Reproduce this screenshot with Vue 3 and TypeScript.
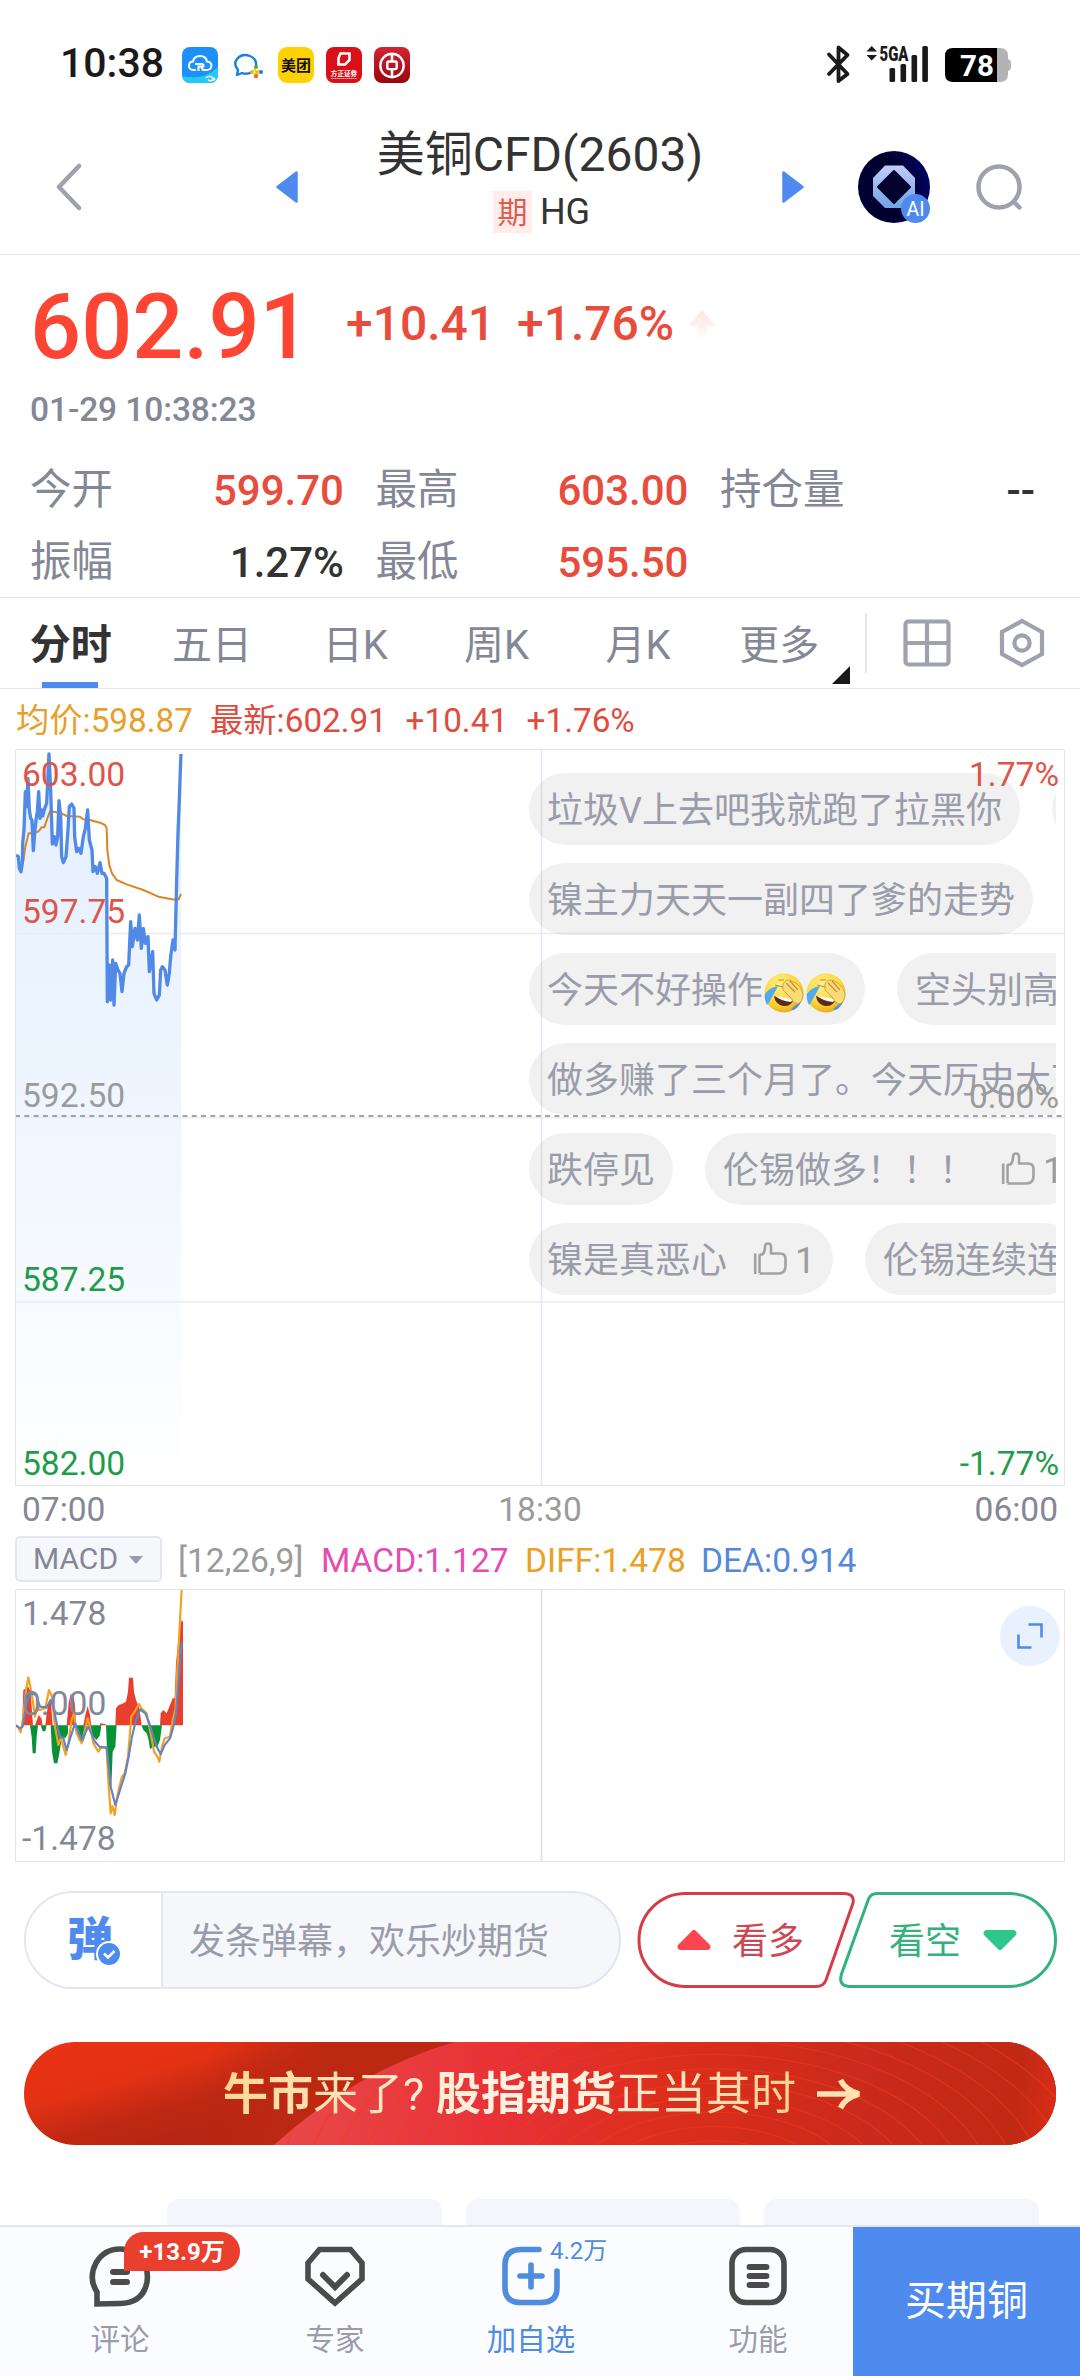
<script setup lang="ts">
interface Stat { label: string; value: string; tone: 'up' | 'flat' }
interface Bullet { text: string; emoji?: number; likes?: number }
interface AxisLabel { text: string; y: number; tone: 'up' | 'down' | 'mid' }

const stats: Stat[] = [
  { label: '今开', value: '599.70', tone: 'up' },
  { label: '最高', value: '603.00', tone: 'up' },
  { label: '持仓量', value: '--', tone: 'flat' },
  { label: '振幅', value: '1.27%', tone: 'flat' },
  { label: '最低', value: '595.50', tone: 'up' },
]

const tabs: string[] = ['分时', '五日', '日K', '周K', '月K', '更多']

const priceAxis: AxisLabel[] = [
  { text: '603.00', y: 26, tone: 'up' },
  { text: '597.75', y: 163, tone: 'up' },
  { text: '592.50', y: 347, tone: 'mid' },
  { text: '587.25', y: 531, tone: 'down' },
  { text: '582.00', y: 715, tone: 'down' },
]
const percentAxis: AxisLabel[] = [
  { text: '1.77%', y: 26, tone: 'up' },
  { text: '0.00%', y: 348, tone: 'mid' },
  { text: '-1.77%', y: 715, tone: 'down' },
]
const macdAxis = [
  { text: '1.478', y: 25 },
  { text: '0.000', y: 115 },
  { text: '-1.478', y: 250 },
]

const bullets: Bullet[][] = [
  [{ text: '垃圾V上去吧我就跑了拉黑你' }, { text: '' }],
  [{ text: '镍主力天天一副四了爹的走势' }],
  [{ text: '今天不好操作', emoji: 2 }, { text: '空头别高兴' }],
  [{ text: '做多赚了三个月了。今天历史大下跌' }],
  [{ text: '跌停见' }, { text: '伦锡做多！！！', likes: 1 }],
  [{ text: '镍是真恶心', likes: 1 }, { text: '伦锡连续连' }],
]

const priceLine =
  '48,345 55,350 58,385 63,395 67,370 68,310 72,270 76,155 80,200 84,115 88,210 92,235 96,240 100,332 104,280 108,240 112,215 116,155 120,235 125,210 128,228 134,205 140,190 147,42 152,150 157,312 163,290 168,315 173,290 177,182 182,230 185,350 190,368 198,350 204,270 208,200 215,192 222,205 224,290 230,335 236,325 243,340 250,290 256,265 263,210 268,300 276,330 279,395 286,380 292,400 300,368 306,400 312,400 320,415 322,785 328,675 332,780 338,660 342,795 347,670 354,690 360,700 366,755 372,700 380,680 386,675 392,545 397,620 405,565 412,600 418,525 424,625 430,565 436,610 444,590 448,695 458,635 462,760 470,780 478,765 482,690 487,680 495,690 502,735 508,700 512,650 519,600 525,630 530,420 534,280 538,180 541,90 543,42'
const averageLine =
  '70,365 76,320 86,280 100,280 115,275 125,262 133,262 142,235 150,214 165,216 180,218 200,228 240,230 250,238 270,240 300,248 315,255 320,265 322,330 328,375 336,400 350,420 380,433 430,450 475,470 528,480 536,478 543,462'

const redBars: string[] = [
  '66,466 70,360 85,350 92,365 97,440 99,466',
  '105,466 116,435 124,445 128,466',
  '136,466 140,430 146,395 153,400 158,466',
  '200,466 206,400 212,372 219,375 224,400 229,466',
  '250,466 256,435 263,408 270,435 274,466',
  '300,460 318,463 318,466 300,466',
  '346,466 348,415 356,405 366,402 378,395 384,365 387,323 399,323 402,365 408,390 418,415 425,466',
  '480,466 482,430 490,420 500,430 510,405 518,385 524,385 528,280 538,180 545,150 549,155 549,466',
]
const greenBars: string[] = [
  '90,466 95,500 98,550 107,550 110,500 114,466',
  '122,466 128,484 136,484 140,466',
  '152,466 156,545 162,580 172,580 178,550 186,500 196,505 204,490 204,466',
  '222,466 236,510 250,515 258,490 262,466',
  '266,466 276,495 290,510 300,495 304,466',
  '318,466 322,560 328,650 334,650 338,545 346,530 350,466',
  '424,466 430,480 440,490 446,510 450,538 460,530 472,530 480,510 486,466',
]
const diffLine =
  '48,466 55,472 62,487 70,440 78,360 85,322 95,370 105,440 110,415 120,420 136,415 147,360 156,380 165,470 175,525 182,505 190,530 197,555 205,520 215,450 222,430 230,490 245,520 263,445 270,470 280,520 295,545 305,530 320,535 326,650 332,730 337,708 344,735 350,690 358,650 366,620 374,610 384,560 394,440 404,425 417,402 424,415 440,430 448,470 456,510 462,545 472,560 478,575 486,530 494,505 510,500 518,450 526,420 532,300 540,150 545,60'
const deaLine =
  '48,466 60,475 68,470 80,400 92,370 108,375 120,410 140,412 152,390 160,410 172,470 180,500 190,505 200,540 212,500 225,460 245,510 265,470 285,515 300,532 320,532 326,590 332,650 346,705 360,660 376,610 386,560 396,500 408,450 420,418 436,430 448,460 460,500 470,530 482,552 494,525 510,505 520,470 528,430 536,330 545,215'

const ripples: number[] = Array.from({ length: 17 }, (_, i) => 60 + i * 17)
</script>

<template>
  <div class="screen">
    <div class="status">
      <span class="clock">10:38</span>
      <div class="apps">
        <svg width="36" height="36" viewBox="0 0 36 36">
          <defs><clipPath id="r1"><rect width="36" height="36" rx="8" /></clipPath></defs>
          <g clip-path="url(#r1)">
            <rect width="36" height="36" fill="#1e90fb" />
            <path d="M0 29Q22 34 36 20V36H0Z" fill="#25c9f7" />
            <path d="M14 23H11Q6.500 22.500 7 18Q7.500 14.500 11 14.500Q12 9 18 9Q24 9 25 14.500Q29.500 15 29.500 19Q29 23 24.500 23H21L19 19.500M13 17H19.500Q22 17 21.500 19.500H16.500V24" fill="none" stroke="#fff" stroke-width="2" />
            <path d="M24 31Q28 27 33 33M26 33Q30 35 33 31" fill="none" stroke="#fff" stroke-width="1.500" />
          </g>
        </svg>
        <svg width="36" height="36" viewBox="0 0 36 36">
          <path d="M22 25Q17 28 12 26L7 28L8 23Q3 17 7 12Q12 6 20 9Q27 12 26 19" fill="none" stroke="#1c7fd6" stroke-width="2.400" stroke-linejoin="round" />
          <circle cx="26" cy="20" r="2" fill="#3eae3a" /><circle cx="31" cy="25" r="2" fill="#1c7fd6" /><circle cx="26" cy="29" r="2.200" fill="#ee6a2b" /><circle cx="22" cy="25" r="2" fill="#f7b500" />
          <path d="M24 22L29 27M29 23L24 28" stroke="#f7b500" stroke-width="1.600" />
        </svg>
        <svg width="36" height="36" viewBox="0 0 36 36">
          <rect width="36" height="36" rx="9" fill="#ffd100" />
          <text x="18" y="23.500" text-anchor="middle" font-size="15" font-weight="700" fill="#111">美团</text>
        </svg>
        <svg width="36" height="36" viewBox="0 0 36 36">
          <rect width="36" height="36" rx="8" fill="#da1019" />
          <path d="M14.500 6.500H23.500V13L19 17.500H12.500V11L14.500 6.500Z" fill="none" stroke="#fff" stroke-width="2.600" />
          <text x="18" y="28.500" text-anchor="middle" font-size="6.600" font-weight="700" fill="#fff">方正证券</text>
          <path d="M5 31.500H31" stroke="#fff" stroke-width="0.700" stroke-dasharray="1.500 .5" />
        </svg>
        <svg width="36" height="36" viewBox="0 0 36 36">
          <defs><linearGradient id="boc" x2="0" y2="1"><stop stop-color="#d32432" /><stop offset="1" stop-color="#98060f" /></linearGradient></defs>
          <rect width="36" height="36" rx="8" fill="url(#boc)" />
          <circle cx="18" cy="18.500" r="11.700" fill="none" stroke="#fff" stroke-width="2.400" />
          <rect x="13.300" y="14.500" width="9.400" height="7.600" rx="1.500" fill="none" stroke="#fff" stroke-width="2.400" />
          <path d="M18 6V14.500M18 22V31" stroke="#fff" stroke-width="2.600" />
        </svg>
      </div>
      <svg class="signals" width="186" height="40" viewBox="826 44 186 40">
        <path d="M829 54.500L847.500 74L838.500 81V47.500L847.500 55L829 74" fill="none" stroke="#1a1a1a" stroke-width="3.800" stroke-linejoin="round" stroke-linecap="round" />
        <path d="M866.500 51.500L871.700 46L877 51.500ZM866.500 55L871.700 60.500L877 55Z" fill="#1a1a1a" />
        <text x="879.500" y="61" font-size="21" font-weight="900" fill="#1a1a1a" textLength="29" lengthAdjust="spacingAndGlyphs">5GA</text>
        <g fill="#1a1a1a"><rect x="889.500" y="68" width="5.600" height="14" rx="1.500" /><rect x="900.500" y="64" width="5.600" height="18" rx="1.500" /><rect x="911.500" y="55" width="5.600" height="27" rx="1.500" /><rect x="922.300" y="46" width="5.600" height="36" rx="1.500" /></g>
        <path d="M996 48H1000Q1008 48 1008 56V59Q1011 60 1011 63V67Q1011 70 1008 71V74Q1008 82 1000 82H996Z" fill="#b3b3b3" />
        <path d="M953 48H997V82H953Q945 82 945 74V56Q945 48 953 48Z" fill="#000" />
        <text x="977" y="76" text-anchor="middle" font-size="29.500" font-weight="700" fill="#fff">78</text>
      </svg>
    </div>

    <header class="head">
      <svg class="back" width="28" height="48" viewBox="0 0 28 48"><path d="M24 3L4 24L24 45" fill="none" stroke="#9fa1ad" stroke-width="4.500" stroke-linecap="round" stroke-linejoin="round" /></svg>
      <svg class="prev" width="22" height="32" viewBox="0 0 22 32"><path d="M20.500 1.500V30.500L1.500 16Z" fill="#4f8bee" stroke="#4f8bee" stroke-width="2.500" stroke-linejoin="round" /></svg>
      <div class="title">
        <div class="name">美铜CFD(2603)</div>
        <div class="code"><span class="tag">期</span><span>HG</span></div>
      </div>
      <svg class="next" width="22" height="32" viewBox="0 0 22 32"><path d="M1.500 1.500V30.500L20.500 16Z" fill="#4f8bee" stroke="#4f8bee" stroke-width="2.500" stroke-linejoin="round" /></svg>
      <svg class="ai" width="72" height="72" viewBox="0 0 72 72">
        <defs>
          <linearGradient id="oct" x2="0" y2="1"><stop stop-color="#c3ccfa" /><stop offset="1" stop-color="#6fa3e4" /></linearGradient>
          <radialGradient id="orb" cx=".12" cy=".55" r=".95"><stop stop-color="#000033" /><stop offset=".55" stop-color="#00002e" /><stop offset="1" stop-color="#02026a" /></radialGradient>
        </defs>
        <circle cx="36" cy="36" r="36" fill="url(#orb)" />
        <path d="M27 14.500H45L57 27V45L45 57H27L15 45V27Z" fill="url(#oct)" />
        <path d="M36 20L52 36L36 52L20 36Z" fill="#02022c" stroke="#02022c" stroke-width="2" stroke-linejoin="round" />
        <circle cx="57.500" cy="57.500" r="14.500" fill="#4f8bee" />
        <text x="57.500" y="64.500" text-anchor="middle" font-size="19.500" fill="#fff">AI</text>
      </svg>
      <svg class="search" width="48" height="48" viewBox="0 0 48 48"><circle cx="24" cy="24" r="20.500" fill="none" stroke="#9fa1ad" stroke-width="4.500" /><path d="M39 39L44.500 44.500" stroke="#9fa1ad" stroke-width="4.500" stroke-linecap="round" /></svg>
    </header>

    <section class="quote">
      <div class="price-row">
        <span class="price">602.91</span>
        <span class="delta">+10.41</span>
        <span class="delta">+1.76%</span>
        <svg class="hint" width="28" height="32" viewBox="0 0 28 32"><defs><linearGradient id="fade" x2="0" y2="1"><stop stop-color="#fde3e1" /><stop offset="1" stop-color="#fff" /></linearGradient></defs><path d="M14 1L28 17H19V31H9V17H0Z" fill="url(#fade)" /></svg>
      </div>
      <div class="time">01-29 10:38:23</div>
      <div class="stats">
        <div v-for="s in stats" :key="s.label" class="stat"><span class="k">{{ s.label }}</span><span class="v" :class="s.tone">{{ s.value }}</span></div>
      </div>
    </section>

    <nav class="tabs">
      <div class="tab-list">
        <div v-for="(t, i) in tabs" :key="t" class="tab" :class="{ on: i === 0 }">{{ t }}<i v-if="i === 5" class="corner" /></div>
      </div>
      <div class="bar" />
      <svg class="grid-icon" width="48" height="48" viewBox="0 0 48 48"><g fill="none" stroke="#9fa1ad" stroke-width="4.200"><rect x="2.500" y="2.500" width="43" height="43" rx="3" /><path d="M24 2V46M2 24H46" /></g></svg>
      <svg class="hex-icon" width="46" height="50" viewBox="0 0 46 50"><g fill="none" stroke="#9fa1ad" stroke-width="4.200"><path d="M23 3L43 14V36L23 47L3 36V14Z" /><circle cx="23" cy="25" r="7.600" /></g></svg>
    </nav>

    <div class="legend"><span class="avg">均价:598.87</span><span>最新:602.91</span><span>+10.41</span><span>+1.76%</span></div>

    <section class="chart">
      <svg width="1050" height="737" viewBox="0 0 1050 737">
        <defs><linearGradient id="area" x2="0" y2="1"><stop stop-color="#e4efff" /><stop offset=".5" stop-color="#eff6ff" /><stop offset="1" stop-color="#fff" /></linearGradient></defs>
        <g transform="translate(-15 -9) scale(.33333)">
          <polygon :points="`48,2235 ${priceLine} 545,2235`" fill="url(#area)" />
        </g>
        <g stroke="#ebecf2" stroke-width="1.500"><path d="M0 184.500H1050M0 368.700H1050M0 552.700H1050" /><path d="M526.500 0V737" stroke="#e6e6f0" /></g>
        <path d="M0 367H1050" stroke="#87878c" stroke-width="1.300" stroke-dasharray="5 4.300" />
        <g transform="translate(-15 -9) scale(.33333)" fill="none" stroke-linejoin="round">
          <polyline :points="averageLine" stroke="#dd8526" stroke-width="6" />
          <polyline :points="priceLine" stroke="#508ae6" stroke-width="10" />
        </g>
      </svg>
      <div class="bullets">
        <div v-for="(row, r) in bullets" :key="r" class="bullet-row">
          <div v-for="(b, i) in row" :key="i" class="bullet">
            <span>{{ b.text }}</span>
            <svg v-for="e in b.emoji ?? 0" :key="e" class="emoji" width="42" height="42" viewBox="0 0 42 42">
              <defs><radialGradient :id="`face${e}`" cx=".4" cy=".3" r=".75"><stop stop-color="#fff08a" /><stop offset=".65" stop-color="#fbd531" /><stop offset="1" stop-color="#e5a51b" /></radialGradient></defs>
              <circle cx="21" cy="21" r="19.500" :fill="`url(#face${e})`" />
              <path d="M11 24Q19 26 31 27Q28 35 20 34Q12 32 11 24Z" fill="#5f2b12" />
              <path d="M12 24Q20 25 30 27L28 30Q18 29 12 24Z" fill="#fff" />
              <path d="M15 14Q12 20 9 25Q6 31 4 33Q1 27 2 22Q7 15 15 14Z" fill="#53a9ef" />
              <path d="M28 37L38 29Q36 35 31 38Z" fill="#4a91e0" />
              <path d="M20 12Q23 6 29 9Q38 13 40 22Q40 30 34 32Q30 31 28 26L20 18Z" fill="#f9dc76" stroke="#d8a441" stroke-width="1" />
              <path d="M23 11L32 20M27 9L35 18M12 13L20 15M15 8L21 8" fill="none" stroke="#ca8c2d" stroke-width="1.200" />
            </svg>
            <template v-if="b.likes">
              <svg class="thumb" width="34" height="34" viewBox="0 0 34 34"><path d="M2.200 11.500V32M6.500 31V14Q6.500 12.500 8 12.500H9.500Q12 10 12 5Q12 1.500 15 1.500Q18 1.500 18 5V11.500H27Q32.500 11.500 32.500 17V24Q32.500 31.500 25 31.500H6.500" fill="none" stroke="#a2a2a2" stroke-width="2.600" stroke-linejoin="round" /></svg>
              <span class="likes">{{ b.likes }}</span>
            </template>
          </div>
        </div>
      </div>
      <span v-for="l in priceAxis" :key="l.text" class="axis left" :class="l.tone" :style="{ top: `${l.y - 20}px` }">{{ l.text }}</span>
      <span v-for="l in percentAxis" :key="l.text" class="axis right" :class="l.tone" :style="{ top: `${l.y - 20}px` }">{{ l.text }}</span>
    </section>

    <div class="hours"><span>07:00</span><span class="noon">18:30</span><span>06:00</span></div>

    <div class="macd-head">
      <div class="picker">MACD<i /></div>
      <span class="params">[12,26,9]</span><span class="m">MACD:1.127</span><span class="d">DIFF:1.478</span><span class="e">DEA:0.914</span>
    </div>

    <section class="macd">
      <svg width="1050" height="273" viewBox="0 0 1050 273">
        <path d="M526.500 0V273" stroke="#dedee4" stroke-width="1.500" />
        <g transform="translate(-15 -19) scale(.33333)">
          <polygon v-for="p in redBars" :key="p" :points="p" fill="#e93f2e" />
          <polygon v-for="p in greenBars" :key="p" :points="p" fill="#079235" />
        </g>
        <g transform="translate(-15 -19) scale(.33333)" fill="none" stroke-linejoin="round">
          <polyline :points="diffLine" stroke="#f3a11f" stroke-width="6.500" />
          <polyline :points="deaLine" stroke="#6284c4" stroke-width="6.500" />
        </g>
      </svg>
      <span v-for="l in macdAxis" :key="l.text" class="axis left" :style="{ top: `${l.y - 20}px` }">{{ l.text }}</span>
      <div class="expand"><svg width="28" height="28" viewBox="0 0 28 28"><path d="M12.500 2.500H25.500V15.500M2.500 12.500V25.500H15.500" fill="none" stroke="#4f8bee" stroke-width="2.600" /></svg></div>
    </section>

    <div class="actions">
      <div class="composer">
        <div class="toggle"><span>弹</span><svg width="26" height="26" viewBox="0 0 26 26"><circle cx="13" cy="13" r="12" fill="#4f8bee" stroke="#fff" stroke-width="2" /><path d="M8 12.500L12 16.500L18.500 10" fill="none" stroke="#fff" stroke-width="2.600" /></svg></div>
        <div class="field">发条弹幕，欢乐炒期货</div>
      </div>
      <div class="votes">
        <svg class="outline" width="422" height="98" viewBox="635 1891 422 98">
          <path d="M684.500 1893.500H843Q854 1894 852 1903L825 1980Q822.500 1986.500 815 1986.500H684.500A46.500 46.500 0 0 1 684.500 1893.500Z" fill="#fff" stroke="#d43d48" stroke-width="3" />
          <path d="M1008 1893.500H876Q870 1893.500 867.500 1899L840.500 1974Q837 1985.500 848 1986.500H1008A46.500 46.500 0 0 0 1008 1893.500Z" fill="#fff" stroke="#35b17c" stroke-width="3" />
        </svg>
        <div class="vote long"><svg width="34" height="20" viewBox="0 0 34 20"><path d="M17 2.500L31 16.500Q31 17.500 30 17.500H4Q3 17.500 3 16.500Z" fill="#fb4652" stroke="#fb4652" stroke-width="5" stroke-linejoin="round" /></svg><span>看多</span></div>
        <div class="vote short"><span>看空</span><svg width="34" height="20" viewBox="0 0 34 20"><path d="M17 17.500L31 3.500Q31 2.500 30 2.500H4Q3 2.500 3 3.500Z" fill="#2fc68b" stroke="#2fc68b" stroke-width="5" stroke-linejoin="round" /></svg></div>
      </div>
    </div>

    <div class="banner">
      <svg class="bg" width="1032" height="103" viewBox="0 0 1032 103">
        <defs>
          <linearGradient id="b1" gradientUnits="userSpaceOnUse" x1="120" y1="0" x2="150" y2="103"><stop stop-color="#e83214" /><stop offset=".3" stop-color="#e23114" /><stop offset=".65" stop-color="#bf2813" /><stop offset="1" stop-color="#b62613" /></linearGradient>
          <linearGradient id="b0" gradientUnits="userSpaceOnUse" x1="190" y1="0" x2="290" y2="40"><stop stop-color="#bd2813" stop-opacity="0" /><stop offset="1" stop-color="#bd2813" /></linearGradient>
          <linearGradient id="b2" gradientUnits="userSpaceOnUse" x1="250" y1="0" x2="1032" y2="60"><stop stop-color="#e94a4a" /><stop offset=".28" stop-color="#e83238" /><stop offset=".5" stop-color="#dc2e1c" /><stop offset=".75" stop-color="#cb2a1c" /><stop offset=".95" stop-color="#c02915" /><stop offset="1" stop-color="#d82d16" /></linearGradient>
          <clipPath id="glow"><path d="M250 103Q330 30 430 0H1032V103Z" /></clipPath>
        </defs>
        <rect width="1032" height="103" fill="url(#b1)" />
        <rect width="1032" height="103" fill="url(#b0)" />
        <path d="M250 103Q330 30 430 0H1032V103Z" fill="url(#b2)" />
        <g clip-path="url(#glow)" fill="none" stroke="#f23a1e" stroke-opacity=".6" stroke-width="1.200"><ellipse v-for="r in ripples" :key="r" cx="690" cy="150" :rx="r * 1.55" :ry="r * 0.85" /></g>
      </svg>
      <div class="slogan"><b>牛市</b>来了<span class="q">?</span><b>股指期货</b>正当其时</div>
      <svg class="arrow" width="44" height="32" viewBox="0 0 44 32"><path d="M0 16H38M23.500 2Q28 12 42 16Q28 20 23.500 30" fill="none" stroke="#ffe2ae" stroke-width="5.500" stroke-linejoin="bevel" /></svg>
    </div>

    <div class="cards"><div /><div /><div /></div>

    <footer class="dock">
      <div class="item">
        <svg width="62" height="62" viewBox="0 0 62 62"><path d="M8 59V47Q-1 33 7 18Q15 4 31 4Q44 4 52 13Q60 23 58 37Q54 58 31 58.500Z" fill="none" stroke="#4b4b4b" stroke-width="5.600" /><path d="M24 27H38M24 37H38" stroke="#4b4b4b" stroke-width="6" stroke-linecap="round" /></svg>
        <span>评论</span><em class="badge">+13.9万</em>
      </div>
      <div class="item second">
        <svg width="62" height="62" viewBox="0 0 62 62"><path d="M15.500 4.500H46.500L58 18V34L31 58L4 34V18Z" fill="none" stroke="#4b4b4b" stroke-width="5.600" /><path d="M19 30L31 42L43 30" fill="none" stroke="#4b4b4b" stroke-width="6" stroke-linecap="round" /></svg>
        <span>专家</span>
      </div>
      <div class="item third">
        <svg width="62" height="62" viewBox="0 0 62 62"><path d="M39 4.500H21Q5 4.500 5 20V43Q5 57.500 21 57.500H41Q57 57.500 57 43V26" fill="none" stroke="#4f8bdf" stroke-width="5.600" stroke-linecap="round" /><path d="M31 20V42M20 31H42" stroke="#4f8bdf" stroke-width="5.600" stroke-linecap="round" /></svg>
        <span>加自选</span><em class="count">4.2万</em>
      </div>
      <div class="item fourth">
        <svg width="62" height="62" viewBox="0 0 62 62"><rect x="5" y="4.500" width="52" height="53" rx="14" fill="none" stroke="#4b4b4b" stroke-width="5.600" /><path d="M22.500 22H39.500M22.500 31H39.500M22.500 40H39.500" stroke="#4b4b4b" stroke-width="5.800" stroke-linecap="round" /></svg>
        <span>功能</span>
      </div>
      <button class="buy">买期铜</button>
    </footer>
  </div>
</template>

<style>
body { margin: 0; background: #fff; }
</style>

<style scoped>
.screen { width: 1080px; height: 2376px; overflow: hidden; background: #fff; font-family: Roboto, "Noto Sans CJK SC", sans-serif; color: #333; }
.screen * { box-sizing: border-box; }
svg { display: block; flex: none; }
span { white-space: nowrap; }

.status { display: flex; align-items: center; height: 120px; padding: 10px 68px 0 60px; }
.clock { width: 122px; font-size: 41px; line-height: 48px; font-weight: 500; color: #1a1a1a; margin-top: -4px; }
.apps { display: flex; gap: 12px; }
.signals { margin-left: auto; margin-top: -2px; }

.head { display: flex; align-items: center; height: 135px; border-bottom: 1.500px solid #e5e5e8; }
.back { margin-left: 55px; }
.prev { margin-left: 193px; }
.title { width: 484px; height: 134px; padding-top: 4px; text-align: center; }
.name { font-size: 48px; line-height: 62px; color: #333; }
.code { display: flex; justify-content: center; align-items: center; gap: 8px; height: 42px; margin-top: 5px; padding-left: 3px; font-size: 36px; line-height: 42px; }
.tag { width: 39px; height: 42px; background: #ffeceb; color: #dc5b4c; font-size: 30px; line-height: 44px; }
.ai { margin-left: 54px; }
.search { margin-left: 45px; }

.quote { height: 342px; padding: 28px 0 0 30px; }
.price-row { display: flex; align-items: center; height: 90px; }
.price { width: 316px; font-size: 90px; line-height: 90px; font-weight: 500; color: #fd4533; }
.delta { width: 171px; font-size: 48px; line-height: 56px; font-weight: 500; color: #e84c3d; margin-top: -8px; }
.hint { margin: -6px 0 0 0; }
.time { margin-top: 17px; font-size: 33.500px; line-height: 40px; font-weight: 500; color: #848896; letter-spacing: -.1px; }
.stats { display: grid; grid-template-columns: 314px 313px 315px; column-gap: 31.500px; grid-auto-rows: 72px; margin-top: 25px; }
.stat { display: flex; justify-content: space-between; align-items: center; font-size: 42px; line-height: 72px; }
.k { font-size: 41.500px; color: #848896; margin-top: -2px; }
.v { font-weight: 500; }
.v.up { color: #e84c3d; }
.v.flat { color: #333; }

.tabs { display: flex; align-items: center; height: 92px; border-top: 1.500px solid #e5e5e8; border-bottom: 1.500px solid #e5e5e8; }
.tab-list { display: flex; width: 850px; height: 89px; }
.tab { position: relative; flex: 1; text-align: center; font-size: 40px; line-height: 93px; color: #848896; }
.tab:nth-child(2) { right: 2px; }
.tab.on { font-weight: 700; font-size: 41px; color: #333; padding-right: 2px; }
.tab.on::after { content: ""; position: absolute; left: 42px; bottom: 0; width: 56px; height: 6px; background: #4f8bee; }
.corner { position: absolute; right: 0; bottom: 4px; border-left: 18px solid transparent; border-bottom: 18px solid #1a1a1a; }
.bar { width: 2px; height: 60px; margin-left: 15px; background: #e5e5e8; }
.grid-icon { margin-left: 36px; }
.hex-icon { margin-left: 48px; }

.legend { display: flex; height: 60px; padding-left: 16px; font-size: 33.300px; line-height: 64px; color: #df4c40; }
.legend span { margin-right: 18.500px; }
.legend span.avg { color: #e7a02c; margin-right: 17px; }

.chart, .macd { position: relative; width: 1050px; margin-left: 15px; }
.chart { height: 737px; }
.chart::after, .macd::after { content: ""; position: absolute; inset: 0; border: 1.500px solid #e5e5ea; }
.axis { position: absolute; font-size: 33.600px; line-height: 40px; color: #848896; }
.axis.left { left: 7px; }
.axis.right { right: 6px; }
.axis.up { color: #df5448; }
.axis.down { color: #1f9c49; }
.axis.mid { color: #9b9b9b; }
.bullets { position: absolute; left: 514px; top: 24px; width: 527px; overflow: hidden; }
.bullet-row { display: flex; gap: 32px; margin-bottom: 18px; }
.bullet { display: flex; align-items: center; flex: none; min-width: 72px; height: 72px; padding: 0 18px; border-radius: 36px; background: rgba(0, 0, 0, .055); font-size: 36px; line-height: 76px; color: #9a9ca9; }
.bullet > span { height: 72px; }
.emoji { margin-top: 7px; }
.thumb { margin: 0 8px 0 26px; }
.likes { width: 20px; color: #9c9c9c; }

.hours { display: flex; justify-content: space-between; height: 50px; padding: 0 22px 0 22px; font-size: 33.500px; line-height: 48px; color: #848896; }
.noon { color: #9b9b9b; }

.macd-head { display: flex; height: 53px; padding-left: 15px; font-size: 33.600px; line-height: 50px; }
.picker { display: flex; align-items: center; width: 147px; height: 46px; padding-left: 16px; border: 2px solid #e4e6ef; border-radius: 5px; background: #f5f7fb; color: #848896; font-size: 30px; line-height: 42px; }
.picker i { margin: 1px 0 0 11px; border: 7.500px solid transparent; border-top: 8px solid #9a9ca9; border-bottom: 0; }
.params { width: 143px; margin-left: 16px; color: #9b9b9b; }
.m { width: 204px; color: #e34db1; }
.d { width: 176px; color: #eba023; }
.e { color: #5489d9; }

.macd { height: 273px; }
.expand { position: absolute; right: 5px; top: 17px; display: flex; align-items: center; justify-content: center; width: 60px; height: 60px; border-radius: 50%; background: #e9f1fe; z-index: 1; }

.actions { display: flex; gap: 15px; margin: 29px 0 0 24px; }
.composer { display: flex; width: 597px; height: 98px; border: 2px solid #e4e6ef; border-radius: 49px; overflow: hidden; background: #f5f7fb; }
.toggle { position: relative; width: 137px; border-right: 2px solid #e4e6ef; background: #fff; color: #4f8bee; font-size: 46px; line-height: 93px; font-weight: 900; padding-left: 41px; }
.toggle svg { position: absolute; left: 70px; top: 48px; }
.field { padding-left: 26px; font-size: 36px; line-height: 98px; color: #9a9ca9; }
.votes { position: relative; display: flex; width: 422px; height: 98px; }
.outline { position: absolute; left: 0; top: 0; }
.vote { position: relative; display: flex; align-items: center; font-size: 36px; line-height: 98px; }
.vote span { padding-top: 3px; }
.long { width: 218px; padding-left: 41px; gap: 21px; color: #c94a54; }
.short { padding-left: 35px; gap: 22px; color: #35b17c; }

.banner { position: relative; display: flex; align-items: center; width: 1032px; height: 103px; margin: 53px 0 0 24px; padding-left: 199px; border-radius: 51.500px; overflow: hidden; }
.bg { position: absolute; left: 0; top: 0; }
.slogan { position: relative; display: flex; padding-top: 3px; font-size: 45px; line-height: 104px; background: linear-gradient(90deg, #ffd894, #fff1e0 45%, #fff1e0 62%, #ffd291); background-clip: text; -webkit-background-clip: text; color: transparent; }
.slogan .q { width: 33px; }
.arrow { position: relative; margin-left: 21px; }

.cards { display: flex; gap: 24px; height: 26px; margin-top: 54px; padding-left: 167px; }
.cards div { width: 274.500px; border-radius: 12px 12px 0 0; background: #f5f6fb; }

.dock { display: flex; height: 151px; border-top: 2px solid #e4e6ef; background: #fbfcff; }
.item { position: relative; display: flex; flex-direction: column; align-items: center; width: 120px; margin-left: 60px; padding-top: 18px; font-size: 29.500px; line-height: 40px; color: #9a9ca9; }
.item > span { margin-top: 13px; }
.item.second { margin-left: 95px; }
.item.third { margin-left: 76px; color: #4f8bdf; }
.item.fourth { margin-left: 107px; }
.badge { position: absolute; left: 64px; top: 5px; width: 116px; height: 39px; border-radius: 20px 20px 20px 0; background: #ea3f2d; color: #fff; font-style: normal; font-weight: 700; font-size: 24px; line-height: 40px; text-align: center; }
.count { position: absolute; left: 79px; top: 4px; font-style: normal; font-size: 24px; line-height: 40px; white-space: nowrap; }
.buy { width: 227px; height: 149px; margin-left: auto; padding: 0; border: 0; background: #4f8bee; color: #fff; font: 41px/149px Roboto, "Noto Sans CJK SC", sans-serif; }
</style>
